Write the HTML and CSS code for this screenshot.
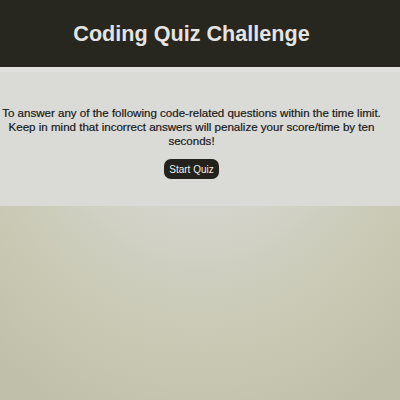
FILE: index.html
```html
<!DOCTYPE html>
<html>
<head>
<meta charset="utf-8">
<link rel="stylesheet" href="styles.css">
</head>
<body>
<header class="top">
  <h1 class="title">Coding Quiz Challenge</h1>
</header>
<div class="strip"></div>
<main class="card">
  <p class="intro">To answer any of the following code-related questions within the time limit. Keep in mind that incorrect answers will penalize your score/time by ten seconds!</p>
  <button class="start">Start Quiz</button>
</main>
</body>
</html>
```
FILE: styles.css
```css
html, body {
  margin: 0;
  height: 100%;
}
body {
  font-family: "Liberation Sans", Arial, sans-serif;
  background: radial-gradient(ellipse 80% 100% at 50% 12%, #dcdcd8 0%, #d4d4cc 40%, #cacab6 70%, #c0c0aa 100%);
  overflow: hidden;
}
.top {
  height: 67px;
  background: #27261f;
  display: flex;
  align-items: center;
  justify-content: center;
  width: 383px;
  box-shadow: 17px 0 0 #27261f;
}
.title {
  margin: 0;
  color: #e4e4e2;
  font-size: 21.6px;
  font-weight: bold;
}
.strip {
  height: 5px;
  background: #e0e0dc;
}
.card {
  width: 383px;
  background: #dadad6;
  padding: 34px 0 27px;
  display: flex;
  flex-direction: column;
  align-items: center;
  box-shadow: 17px 0 0 #dadad6;
}
.intro {
  margin: 0 0 11px;
  font-size: 11.55px;
  line-height: 14px;
  color: #18181a;
  text-align: center;
  width: 383px;
  -webkit-text-stroke: 0.2px #18181a;
}
.start {
  font-family: "Liberation Sans", Arial, sans-serif;
  font-size: 10px;
  color: #f0f0f0;
  background: #24221c;
  border: none;
  border-radius: 7px;
  padding: 0 5px;
  height: 20px;
}
```
